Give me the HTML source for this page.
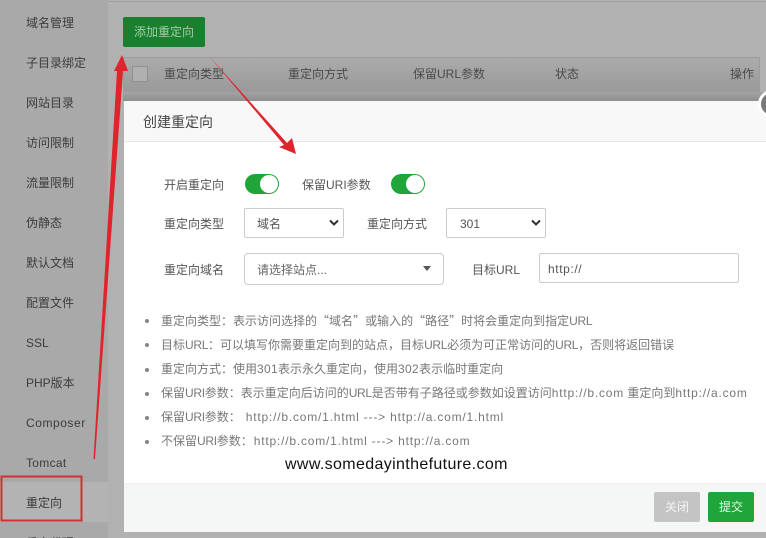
<!DOCTYPE html>
<html lang="zh-CN"><head><meta charset="utf-8"><title>创建重定向</title>
<style>
html,body{margin:0;padding:0;width:766px;height:538px;overflow:hidden}
body{position:relative;background:#b1b1b1;font:12px/16px "Liberation Sans","Noto Sans CJK SC",sans-serif;color:#555}
#p{position:absolute;left:0;top:0;width:766px;height:538px;overflow:hidden}
.a{position:absolute;white-space:nowrap}
.side{left:26px;color:#3c3c3c}
.th{top:66px;color:#4a4a4a}
.lb{color:#555}
.li{left:161px;color:#777}
.li b{font-weight:normal;letter-spacing:.8px}
.li u{text-decoration:none;letter-spacing:-.33px}
.li s{text-decoration:none;font-family:"Noto Sans CJK SC",sans-serif}
.li em{font-style:normal;letter-spacing:.33px}
.dot{position:absolute;left:145px;width:4px;height:4px;border-radius:50%;background:#888}
.box{position:absolute;box-sizing:border-box;background:#fff;border:1px solid #ccc;border-radius:2px}
.sw{position:absolute;width:34px;height:20px;border-radius:10px;background:#20a53a}
.sw i{position:absolute;right:1px;top:1px;width:18px;height:18px;border-radius:50%;background:#fff}
</style></head><body><div id="p">
<div class="a" style="left:0;top:0;width:108px;height:538px;background:#a9a9a9"></div>
<div class="a" style="left:0;top:482px;width:108px;height:40px;background:#b3b3b3"></div>
<div class="a" style="left:108px;top:1px;width:658px;height:1px;background:#a0a0a0"></div>

<div class="a side" style="top:15px">域名管理</div>
<div class="a side" style="top:55px">子目录绑定</div>
<div class="a side" style="top:95px">网站目录</div>
<div class="a side" style="top:135px">访问限制</div>
<div class="a side" style="top:175px">流量限制</div>
<div class="a side" style="top:215px">伪静态</div>
<div class="a side" style="top:255px">默认文档</div>
<div class="a side" style="top:295px">配置文件</div>
<div class="a side" style="top:335px">SSL</div>
<div class="a side" style="top:375px">PHP版本</div>
<div class="a side" style="top:415px;letter-spacing:.55px">Composer</div>
<div class="a side" style="top:455px;letter-spacing:.3px">Tomcat</div>
<div class="a side" style="top:495px">重定向</div>
<div class="a side" style="top:535px">反向代理</div>

<div class="a" style="left:123px;top:17px;width:82px;height:30px;background:#1a7f2e;border-radius:2px;color:#9fcfa8;text-align:center;line-height:30px">添加重定向</div>

<div class="a" style="left:123px;top:57px;width:637px;height:35px;box-sizing:border-box;border:1px solid #9c9c9c;background:linear-gradient(#ababab,#9a9a9a)"></div>
<div class="a" style="left:123px;top:92px;width:643px;height:9px;background:linear-gradient(#a3a3a3,#8f8f8f)"></div>
<div class="a" style="left:132px;top:66px;width:16px;height:16px;box-sizing:border-box;border:1px solid #8f8f8f;background:#b0b0b0;border-radius:1px"></div>
<div class="a th" style="left:164px">重定向类型</div>
<div class="a th" style="left:288px">重定向方式</div>
<div class="a th" style="left:413px">保留URL参数</div>
<div class="a th" style="left:555px">状态</div>
<div class="a th" style="left:730px">操作</div>

<!-- dialog -->
<div class="a" style="left:124px;top:101px;width:642px;height:431px;background:#fff"></div>
<div class="a" style="left:124px;top:101px;width:642px;height:41px;box-sizing:border-box;background:#f8f8f8;border-bottom:1px solid #e8e8e8"></div>
<div class="a" style="left:143px;top:114px;font-size:14px;color:#444">创建重定向</div>
<div class="a" style="left:758px;top:90px;width:28px;height:28px;box-sizing:border-box;border:3px solid #fff;border-radius:50%;background:#7a7a7a"></div>

<div class="a lb" style="left:164px;top:177px">开启重定向</div>
<div class="sw" style="left:245px;top:174px"><i></i></div>
<div class="a lb" style="left:302px;top:177px">保留URI参数</div>
<div class="sw" style="left:391px;top:174px"><i></i></div>

<div class="a lb" style="left:164px;top:216px">重定向类型</div>
<div class="box" style="left:244px;top:208px;width:100px;height:30px"></div>
<div class="a lb" style="left:257px;top:216px">域名</div>
<svg class="a" style="left:329px;top:219px" width="10" height="8" viewBox="0 0 10 8"><path d="M1 1.5L5 5.5L9 1.5" fill="none" stroke="#333" stroke-width="2"/></svg>
<div class="a lb" style="left:367px;top:216px">重定向方式</div>
<div class="box" style="left:446px;top:208px;width:100px;height:30px"></div>
<div class="a lb" style="left:460px;top:216px">301</div>
<svg class="a" style="left:531px;top:219px" width="10" height="8" viewBox="0 0 10 8"><path d="M1 1.5L5 5.5L9 1.5" fill="none" stroke="#333" stroke-width="2"/></svg>

<div class="a lb" style="left:164px;top:262px">重定向域名</div>
<div class="box" style="left:244px;top:253px;width:200px;height:32px;border-radius:4px"></div>
<div class="a" style="left:257px;top:262px;color:#666">请选择站点...</div>
<svg class="a" style="left:423px;top:266px" width="8" height="5" viewBox="0 0 8 5"><path d="M0 0H8L4 5Z" fill="#555"/></svg>
<div class="a lb" style="left:472px;top:262px">目标URL</div>
<div class="box" style="left:539px;top:253px;width:200px;height:30px"></div>
<div class="a lb" style="left:548px;top:261px;letter-spacing:.6px">http://</div>

<i class="dot" style="top:319px"></i><div class="a li" style="top:313px">重定向类型：表示访问选择的<s>“</s>域名<s>”</s>或输入的<s>“</s>路径<s>”</s>时将会重定向到指定<u>URL</u></div>
<i class="dot" style="top:343px"></i><div class="a li" style="top:337px">目标<u>URL</u>：可以填写你需要重定向到的站点，目标<u>URL</u>必须为可正常访问的<u>URL</u>，否则将返回错误</div>
<i class="dot" style="top:368px"></i><div class="a li" style="top:361px">重定向方式：使用<em>301</em>表示永久重定向，使用<em>302</em>表示临时重定向</div>
<i class="dot" style="top:392px"></i><div class="a li" style="top:385px">保留<u>URI</u>参数：表示重定向后访问的<u>URL</u>是否带有子路径或参数如设置访问<b>http://b.com</b> 重定向到<b>http://a.com</b></div>
<i class="dot" style="top:416px"></i><div class="a li" style="top:409px">保留<u>URI</u>参数：<b style="margin-left:5px">http://b.com/1.html ---&gt; http://a.com/1.html</b></div>
<i class="dot" style="top:440px"></i><div class="a li" style="top:433px">不保留<u>URI</u>参数：<b style="margin-left:1px">http://b.com/1.html ---&gt; http://a.com</b></div>

<div class="a" style="left:285px;top:456px;font-size:16px;line-height:18px;color:#111;letter-spacing:.36px">www.somedayinthefuture.com</div>

<div class="a" style="left:124px;top:483px;width:642px;height:49px;box-sizing:border-box;background:#f5f6f6;border-top:1px solid #eee"></div>
<div class="a" style="left:654px;top:492px;width:46px;height:30px;background:#c4c4c4;border-radius:2px;color:#f4f4f4;text-align:center;line-height:30px">关闭</div>
<div class="a" style="left:708px;top:492px;width:46px;height:30px;background:#20a53a;border-radius:2px;color:#e8f6ea;text-align:center;line-height:30px">提交</div>

<!-- annotations -->
<svg class="a" style="left:0;top:0" width="766" height="538" viewBox="0 0 766 538">
<path d="M93.5 459L117 71L114 71L122 55L128 71L123 71L95 459Z" fill="#e0242c"/>
<path d="M209 56L287 143L292 138L296 154L279 147L284 145Z" fill="#e0242c"/>
<rect x="1.5" y="476.5" width="80" height="44" fill="none" stroke="#d32f35" stroke-width="2"/>
</svg>
</div></body></html>
